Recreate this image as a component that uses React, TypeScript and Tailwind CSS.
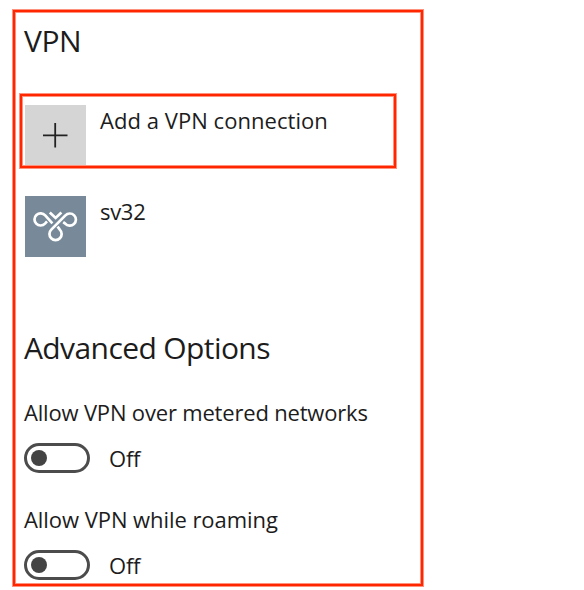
type ToggleProps = {
  label: string;
  className?: string;
};

const Toggle = ({ label, className = "" }: ToggleProps) => {
  return (
    <div className="flex flex-col">
      <p
        className={`h-[30px] text-[22px] leading-[28px] whitespace-nowrap ${className}`}
      >
        {label}
      </p>
      <div className="mt-[15px] flex h-[30px] items-center">
        <div className="flex h-[30px] w-[66px] items-center rounded-full border-3 border-[#4c4c4c] pl-[4px]">
          <div className="h-4 w-4 rounded-full bg-[#444444]"></div>
        </div>
        <p className="ml-[19px] text-[22px] leading-[30px] tracking-[-0.2px]">
          Off
        </p>
      </div>
    </div>
  );
};

const VpnIcon = () => {
  return (
    <svg
      width="61"
      height="61"
      viewBox="0 0 61 61"
      fill="none"
      stroke="#ffffff"
      strokeWidth="2.7"
    >
      <path d="M27.4 27.4L20.2 19.4A6.1 6.1 0 1 0 20 27.6L22 25.4" />
      <path d="M24.8 16.6L30.6 22L36.4 16.6" />
      <path d="M38.2 26.2L40.2 27.6A6.1 6.1 0 1 0 40.4 19.4L26.3 33.6A6.1 6.1 0 1 0 34.8 33.6L32.6 30.6" />
    </svg>
  );
};

export default function App() {
  return (
    <div className="h-[590px] w-[584px] overflow-hidden bg-white pt-[10px] pl-[13px] font-['Open_Sans',sans-serif] text-[#1c1c1c]">
      <div className="flex h-[576px] w-[410px] flex-col border-2 border-[#ff2600] shadow-[0_0_0_1px_#ff260080,inset_0_0_0_1px_#ff260080]">
        <h1 className="mt-[9px] ml-[9px] h-10 text-[30px] leading-10 tracking-[-0.5px]">
          VPN
        </h1>

        <div className="mt-[33px] ml-[5px] flex h-[74px] w-[376px] border-2 border-[#ff2600] pt-[9px] pl-[3px] shadow-[0_0_0_1px_#ff260080,inset_0_0_0_1px_#ff260080]">
          <div className="h-[60px] w-[61px] bg-[#d5d5d5]">
            <svg width="61" height="60" stroke="#222222" strokeWidth="1.8">
              <path d="M18 30.3H42.5M30.2 18V42.5" />
            </svg>
          </div>
          <p className="ml-[14px] text-[22px] leading-[30px] tracking-[0.05px] whitespace-nowrap">
            Add a VPN connection
          </p>
        </div>

        <div className="mt-7 ml-[10px] flex h-[61px]">
          <div className="h-[61px] w-[61px] bg-[#788a99]">
            <VpnIcon />
          </div>
          <p className="ml-[14px] text-[22px] leading-[30px] tracking-[-0.3px]">
            sv32
          </p>
        </div>

        <h2 className="mt-[71px] ml-[9px] h-10 text-[30px] leading-10 tracking-[-0.6px] whitespace-nowrap">
          Advanced Options
        </h2>

        <div className="mt-[30px] ml-[9px] flex flex-col gap-8">
          <Toggle
            label="Allow VPN over metered networks"
            className="tracking-[-0.18px]"
          />
          <Toggle
            label="Allow VPN while roaming"
            className="tracking-[-0.06px]"
          />
        </div>
      </div>
    </div>
  );
}
